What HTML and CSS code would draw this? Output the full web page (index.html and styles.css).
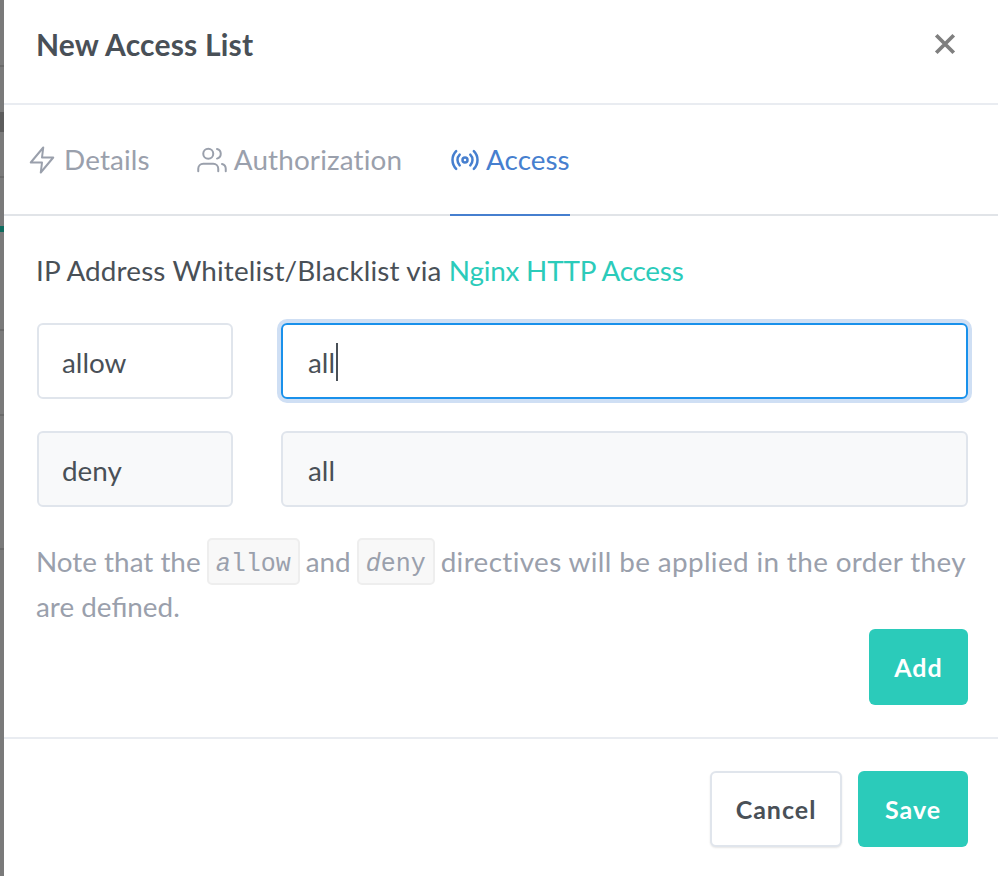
FILE: index.html
```html
<!DOCTYPE html>
<html>
  <head>
    <title>New Access List</title>
    <link rel="stylesheet" href="styles.css">
  </head>
  <body>
    <div class="backdrop">
      <span class="backdrop-line line-1"></span>
      <span class="backdrop-line line-2"></span>
      <span class="backdrop-line line-3"></span>
      <span class="backdrop-line line-4"></span>
      <span class="backdrop-line line-5"></span>
      <span class="backdrop-line line-6"></span>
      <span class="backdrop-line line-7"></span>
    </div>

    <div class="modal">
      <div class="modal-header">
        <p class="modal-title">New Access List</p>
        <svg class="close-icon" viewBox="0 0 24 24" width="30" height="30">
          <path d="M5 5l14 14M19 5L5 19"></path>
        </svg>
      </div>

      <div class="tabs">
        <div class="tab">
          <svg class="tab-icon" viewBox="0 0 24 24" width="30" height="30">
            <path d="M13 2L3 14h9l-1 8 10-12h-9l1-8z"></path>
          </svg>
          <span>Details</span>
        </div>
        <div class="tab">
          <svg class="tab-icon" viewBox="0 0 24 24" width="30" height="30">
            <path d="M17 21v-2a4 4 0 0 0-4-4H5a4 4 0 0 0-4 4v2"></path>
            <circle cx="9" cy="7" r="4"></circle>
            <path d="M23 21v-2a4 4 0 0 0-3-3.87"></path>
            <path d="M16 3.13a4 4 0 0 1 0 7.75"></path>
          </svg>
          <span>Authorization</span>
        </div>
        <div class="tab tab-active">
          <svg class="tab-icon" viewBox="0 0 24 24" width="30" height="30">
            <circle cx="12" cy="12" r="2"></circle>
            <path d="M16.24 7.76a6 6 0 0 1 0 8.49"></path>
            <path d="M7.76 16.24a6 6 0 0 1 0-8.49"></path>
            <path d="M19.07 4.93a10 10 0 0 1 0 14.14"></path>
            <path d="M4.93 19.07a10 10 0 0 1 0-14.14"></path>
          </svg>
          <span>Access</span>
        </div>
      </div>

      <div class="modal-body">
        <p class="intro">IP Address Whitelist/Blacklist via <a class="link">Nginx HTTP Access</a></p>

        <div class="rule-row">
          <div class="field field-small">allow</div>
          <div class="field field-grow field-focus">all<span class="caret"></span></div>
        </div>
        <div class="rule-row">
          <div class="field field-small field-muted">deny</div>
          <div class="field field-grow field-muted">all</div>
        </div>

        <div class="note">
          <div class="note-line">
            <span>Note that the</span>
            <code class="code">allow</code>
            <span>and</span>
            <code class="code">deny</code>
            <span class="note-rest">directives will be applied in the order they</span>
          </div>
          <div class="note-line">are defined.</div>
        </div>

        <div class="add-row">
          <button class="btn btn-primary">Add</button>
        </div>
      </div>

      <div class="modal-footer">
        <button class="btn btn-cancel">Cancel</button>
        <button class="btn btn-primary btn-save">Save</button>
      </div>
    </div>
  </body>
</html>
```

FILE: styles.css
```css
html, body {
  margin: 0;
  height: 876px;
  overflow: hidden;
}

body {
  display: flex;
  background: #7a7a7a;
  color: #495057;
  font-family: Lato, "Noto Sans", sans-serif;
}

.backdrop {
  position: relative;
  width: 4px;
  flex-shrink: 0;
}

.backdrop-line {
  position: absolute;
  left: 0;
  width: 4px;
  height: 2px;
  background: #6a6a6a;
}

.line-1 { top: 65px; }
.line-2 { top: 112px; height: 20px; background: #5c5c5c; }
.line-3 { top: 176px; }
.line-4 { top: 226px; height: 6px; background: #0e6b5e; }
.line-5 { top: 329px; }
.line-6 { top: 414px; }
.line-7 { top: 548px; }

.modal {
  flex: 1;
  min-width: 0;
  display: flex;
  flex-direction: column;
  background: #fff;
}

.modal-header {
  display: flex;
  align-items: center;
  justify-content: space-between;
  height: 105px;
  padding: 0 38px 15px 32px;
  box-sizing: border-box;
  border-bottom: 2px solid #e9ecf1;
}

.modal-title {
  margin: 0;
  font-size: 30px;
  font-weight: 700;
  letter-spacing: 0.2px;
}

.close-icon path {
  fill: none;
  stroke: #7f7f7f;
  stroke-width: 3;
}

.tabs {
  display: flex;
  gap: 47px;
  height: 111px;
  padding-left: 23px;
  box-sizing: border-box;
  border-bottom: 2px solid #e1e4e8;
}

.tab {
  display: flex;
  align-items: center;
  gap: 7px;
  height: 111px;
  padding-bottom: 2px;
  box-sizing: border-box;
  font-size: 27.85px;
  letter-spacing: 0.15px;
  color: #9aa0ac;
}

.tab-icon {
  fill: none;
  stroke: currentColor;
  stroke-width: 1.6;
  stroke-linecap: round;
  stroke-linejoin: round;
}

.tab-active {
  gap: 6px;
  margin-left: 1px;
  padding-bottom: 0;
  letter-spacing: 0;
  color: #467fcf;
  border-bottom: 2px solid #467fcf;
}

.tab-active .tab-icon {
  stroke-width: 2;
}

.modal-body {
  flex: 1;
  padding: 0 30px 0 33px;
}

.intro {
  margin: 35px 0 32px -1px;
  font-size: 27.85px;
  line-height: 40px;
  letter-spacing: 0.15px;
}

.link {
  letter-spacing: -0.2px;
  color: #2bcbba;
}

.rule-row {
  display: flex;
  gap: 48px;
  margin-bottom: 32px;
}

.field {
  height: 76px;
  box-sizing: border-box;
  display: flex;
  align-items: center;
  padding: 2px 0 0 25px;
  border: 2px solid #e0e5ec;
  border-radius: 6px;
  font-size: 27.85px;
}

.field-small {
  width: 196px;
  padding-left: 23px;
}

.field-grow {
  flex: 1;
}

.field-focus {
  border-color: #1991eb;
  box-shadow: 0 0 0 4px #cfdff4;
}

.field-muted {
  background: #f8f9fa;
}

.caret {
  width: 2px;
  height: 38px;
  margin-left: 1px;
  background: #495057;
}

.note {
  margin-left: -1px;
  font-size: 27.85px;
  color: #9aa0ac;
}

.note-line {
  display: flex;
  align-items: center;
  gap: 6px;
  height: 45px;
  white-space: nowrap;
}

.note-rest {
  letter-spacing: 0.37px;
}

.code {
  padding: 7px 7px 0;
  line-height: 36px;
  background: #f8f8f8;
  border: 2px solid #eeeeee;
  border-radius: 5px;
  font-family: "Liberation Mono", monospace;
  font-size: 25px;
}

.code::first-letter {
  font-style: italic;
}

.add-row {
  display: flex;
  justify-content: flex-end;
}

.btn {
  height: 76px;
  box-sizing: border-box;
  border: 0;
  border-radius: 6px;
  font-family: inherit;
  font-size: 25px;
  font-weight: 700;
  letter-spacing: 1px;
}

.btn-primary {
  width: 99px;
  background: #2bcbba;
  color: #fff;
}

.modal-footer {
  display: flex;
  justify-content: flex-end;
  gap: 16px;
  height: 139px;
  padding: 32px 30px 0 0;
  box-sizing: border-box;
  border-top: 2px solid #e9ecf1;
}

.btn-cancel {
  width: 132px;
  background: #fff;
  color: #495057;
  border: 2px solid #e0e5ec;
  box-shadow: 0 1px 2px rgba(0, 0, 0, 0.1);
}

.btn-save {
  width: 110px;
}
```
